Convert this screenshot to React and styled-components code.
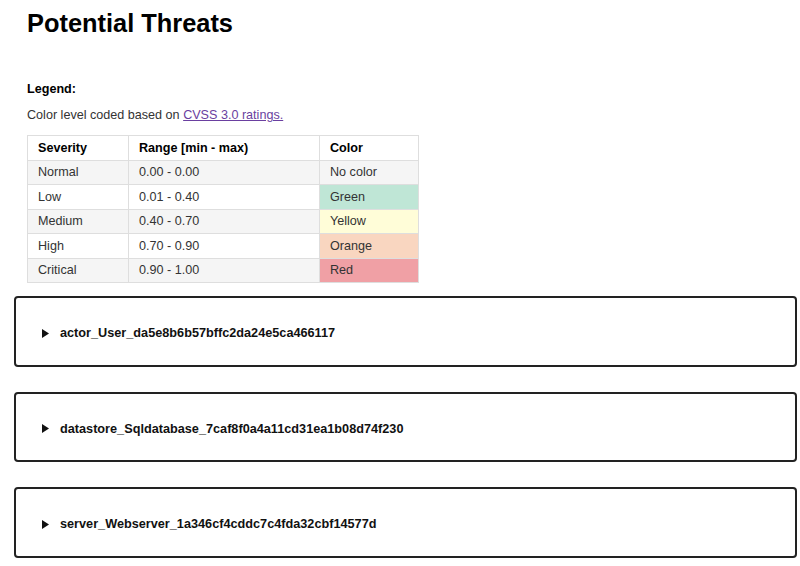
import styled, { createGlobalStyle } from "styled-components";

const GlobalStyle = createGlobalStyle`
  body {
    margin: 0;
    background: #fff;
    font-family: "Liberation Sans", Arial, sans-serif;
    color: #111;
  }
`;

const SEVERITIES = [
  { name: "Normal", range: "0.00 - 0.00", color: "No color", bg: null },
  { name: "Low", range: "0.01 - 0.40", color: "Green", bg: "#bfe6d6" },
  { name: "Medium", range: "0.40 - 0.70", color: "Yellow", bg: "#fffdd8" },
  { name: "High", range: "0.70 - 0.90", color: "Orange", bg: "#f9d6c0" },
  { name: "Critical", range: "0.90 - 1.00", color: "Red", bg: "#f0a0a5" },
];

const COMPONENTS = [
  "actor_User_da5e8b6b57bffc2da24e5ca466117",
  "datastore_Sqldatabase_7caf8f0a4a11cd31ea1b08d74f230",
  "server_Webserver_1a346cf4cddc7c4fda32cbf14577d",
];

const Page = styled.div`
  padding: 0 3px 0 14px;
`;

const Intro = styled.section`
  padding-left: 13px;
`;

const Title = styled.h1`
  margin: 0;
  padding-top: 8px;
  font-size: 25.4px;
  line-height: 30px;
  font-weight: bold;
  color: #000;
`;

const Legend = styled.h4`
  margin: 43px 0 0;
  font-size: 12.6px;
  line-height: 16px;
  font-weight: bold;
  color: #000;
`;

const Note = styled.p`
  margin: 10px 0 0;
  font-size: 12.6px;
  line-height: 16px;
  color: #333;

  a {
    color: #6a3fa0;
    text-decoration: underline;
  }
`;

const Table = styled.table`
  margin-top: 12px;
  border-collapse: collapse;
  width: 392px;
  font-size: 12.6px;
  color: #333;
`;

const HeadCell = styled.th`
  height: 23.5px;
  width: ${(p) => p.$width || "auto"};
  padding: 0 10px;
  border: 1px solid #dedede;
  text-align: left;
  font-weight: bold;
  color: #000;
  background: #fff;
`;

const Row = styled.tr`
  background: ${(p) => (p.$striped ? "#f5f5f5" : "#fff")};
`;

const Cell = styled.td`
  height: 23.5px;
  padding: 0 10px;
  border: 1px solid #dedede;
  text-align: left;
  background: ${(p) => p.$bg || "transparent"};
`;

const Cards = styled.div`
  margin-top: 13px;
  display: flex;
  flex-direction: column;
  gap: 25px;
`;

const Card = styled.details`
  height: 70.5px;
  box-sizing: border-box;
  border: 2px solid #222;
  border-radius: 4px;
`;

const Summary = styled.summary`
  list-style: none;
  display: flex;
  align-items: center;
  gap: 11px;
  padding: 27px 0 0 26px;
  line-height: 16px;
  font-size: 12.7px;
  font-weight: bold;
  color: #111;
  cursor: pointer;

  &::-webkit-details-marker {
    display: none;
  }
`;

function Marker() {
  return (
    <svg width="7" height="9" viewBox="0 0 7 9">
      <path d="M0 0 L7 4.5 L0 9 Z" fill="#111" />
    </svg>
  );
}

export default function App() {
  return (
    <>
      <GlobalStyle />
      <Page>
        <Intro>
          <Title>Potential Threats</Title>
          <Legend>Legend:</Legend>
          <Note>
            Color level coded based on <a href="#cvss">CVSS 3.0 ratings.</a>
          </Note>
          <Table>
            <thead>
              <tr>
                <HeadCell $width="80px">Severity</HeadCell>
                <HeadCell $width="170px">Range [min - max)</HeadCell>
                <HeadCell>Color</HeadCell>
              </tr>
            </thead>
            <tbody>
              {SEVERITIES.map((s, i) => (
                <Row key={s.name} $striped={i % 2 === 0}>
                  <Cell>{s.name}</Cell>
                  <Cell>{s.range}</Cell>
                  <Cell $bg={s.bg}>{s.color}</Cell>
                </Row>
              ))}
            </tbody>
          </Table>
        </Intro>
        <Cards>
          {COMPONENTS.map((c) => (
            <Card key={c}>
              <Summary>
                <Marker />
                {c}
              </Summary>
            </Card>
          ))}
        </Cards>
      </Page>
    </>
  );
}
